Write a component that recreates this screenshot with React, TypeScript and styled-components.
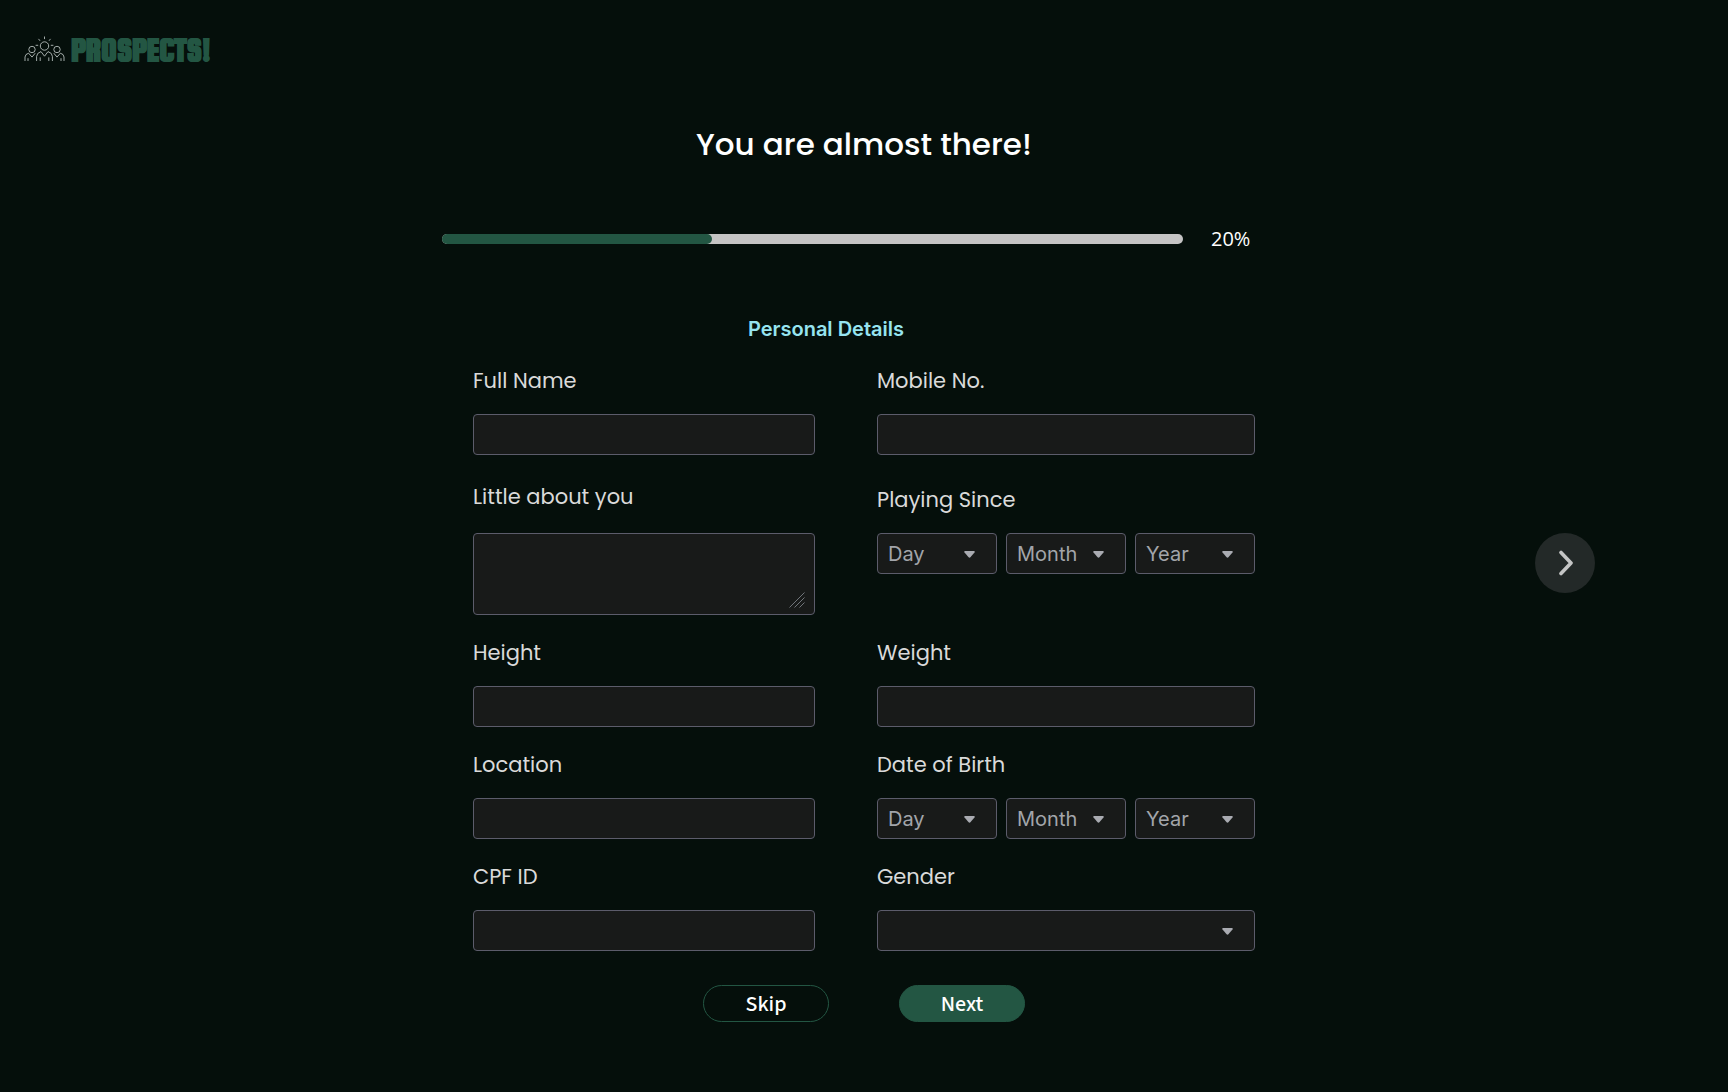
import React from "react";
import styled, { createGlobalStyle } from "styled-components";

const color = {
  page: "#050f0b",
  field: "#181a19",
  border: "#5c5c6b",
  green: "#235643",
  track: "#c5c4c4",
  label: "#dadada",
  hint: "#a2a5aa",
  heading: "#96e4f0",
};

const display = 'Poppins, Inter, "Open Sans", sans-serif';
const body = 'Inter, Roboto, sans-serif';
const humanist = '"Source Sans 3", "Noto Sans", sans-serif';

const GlobalStyle = createGlobalStyle`
  *, *::before, *::after { box-sizing: border-box; }
  body {
    margin: 0;
    background: ${color.page};
    color: #fff;
    font-family: ${body};
  }
`;

const Page = styled.div`
  min-height: 100vh;
`;

const Header = styled.header`
  padding: 32px 24px 0;
`;

const Brand = styled.a`
  display: inline-flex;
  align-items: center;
  gap: 6px;
  height: 36px;
  color: ${color.green};
  font-family: "Squada One", "Roboto Condensed", "Liberation Sans Narrow", sans-serif;
  font-size: 33px;
  font-weight: 700;
  line-height: 36px;
  text-decoration: none;
  -webkit-text-stroke: 1px ${color.green};
`;

const Title = styled.h1`
  margin: 54px 0 0;
  font-family: ${display};
  font-size: 31px;
  font-weight: 500;
  line-height: 44px;
  text-align: center;
`;

const ProgressRow = styled.div`
  display: flex;
  align-items: center;
  gap: 28px;
  width: 100%;
  max-width: 844px;
  margin: 59px auto 0;
  line-height: 28px;
`;

const Track = styled.div`
  flex: 1;
  max-width: 741px;
  height: 10px;
  border-radius: 5px;
  background: ${color.track};
`;

const Fill = styled.div`
  height: 100%;
  border-radius: 5px;
  background: ${color.green};
`;

const Percent = styled.span`
  font-family: "Open Sans", sans-serif;
  font-size: 20px;
`;

const Main = styled.main`
  display: grid;
  grid-template-columns: 1fr minmax(0, 782px) 1fr;
  margin-top: 62px;
  padding-bottom: 70px;
`;

const Form = styled.form`
  grid-column: 2;
`;

const SectionTitle = styled.h2`
  margin: 0 0 21px;
  padding-right: 76px;
  color: ${color.heading};
  font-size: 20px;
  font-weight: 600;
  line-height: 28px;
  text-align: center;
`;

const Row = styled.div<{ $top?: number }>`
  display: grid;
  grid-template-columns: 342fr 378fr;
  column-gap: 62px;
  margin-top: ${(p) => p.$top ?? 21}px;
`;

const Field = styled.div<{ $gap?: number; $top?: number }>`
  display: flex;
  flex-direction: column;
  gap: ${(p) => p.$gap ?? 16}px;
  min-width: 0;
  padding-top: ${(p) => p.$top ?? 0}px;
`;

const Label = styled.label`
  color: ${color.label};
  font-family: ${display};
  font-size: 21px;
  line-height: 34px;
`;

const Input = styled.input`
  width: 100%;
  height: 41px;
  padding: 0 12px;
  border: 1px solid ${color.border};
  border-radius: 4px;
  background: ${color.field};
  color: ${color.label};
  font: 20px ${body};
`;

const Control = styled.div`
  position: relative;
  display: flex;
  flex: 1;
`;

const TextArea = styled.textarea`
  width: 100%;
  height: 82px;
  padding: 8px 12px;
  border: 1px solid ${color.border};
  border-radius: 4px;
  background: ${color.field};
  color: ${color.label};
  font: 20px ${body};
  resize: none;
`;

const Grip = styled.svg`
  position: absolute;
  right: 10px;
  bottom: 7px;
  pointer-events: none;
`;

const SelectBox = styled.select`
  appearance: none;
  width: 100%;
  height: 41px;
  padding: 0 36px 0 10px;
  border: 1px solid ${color.border};
  border-radius: 4px;
  background: ${color.field};
  color: ${color.hint};
  font: 20px ${body};
`;

const Caret = styled.svg`
  position: absolute;
  top: 18px;
  right: 22px;
  pointer-events: none;
`;

const Dates = styled.div`
  display: flex;
  gap: 9px;
`;

const Actions = styled.div`
  display: flex;
  justify-content: center;
  gap: 70px;
  margin-top: 34px;
`;

const Action = styled.button<{ $primary?: boolean }>`
  width: 126px;
  height: 37px;
  padding: 2px 0 0;
  border: 1px solid ${color.green};
  border-radius: 19px;
  background: ${(p) => (p.$primary ? color.green : "transparent")};
  color: #fff;
  font: 500 22px/33px ${humanist};
  cursor: pointer;
`;

const Forward = styled.button`
  display: flex;
  align-items: center;
  justify-content: center;
  justify-self: end;
  width: 60px;
  height: 60px;
  margin: 218px 133px 0 0;
  padding: 0 0 0 2px;
  border: 0;
  border-radius: 50%;
  background: #232928;
  cursor: pointer;
`;

function Select({ id, label, options }: { id: string; label: string; options: (string | number)[] }) {
  return (
    <Control>
      <SelectBox id={id} aria-label={label} defaultValue="">
        <option value="">{label === "Gender" ? "" : label}</option>
        {options.map((o) => (
          <option key={o}>{o}</option>
        ))}
      </SelectBox>
      <Caret width="11" height="7" viewBox="0 0 11 7" aria-hidden="true">
        <path d="M1 0h9q1.200 .3.500 1.400L6.600 6.100q-1.100 1.100-2.200 0L.500 1.400Q-.200.300 1 0Z" fill="#a9abb1" />
      </Caret>
    </Control>
  );
}

const range = (from: number, count: number) => Array.from({ length: count }, (_, i) => from + i);
const months = ["Jan", "Feb", "Mar", "Apr", "May", "Jun", "Jul", "Aug", "Sep", "Oct", "Nov", "Dec"];

function DateField({ id, label, top }: { id: string; label: string; top?: number }) {
  return (
    <Field $top={top}>
      <Label htmlFor={`${id}-day`}>{label}</Label>
      <Dates>
        <Select id={`${id}-day`} label="Day" options={range(1, 31)} />
        <Select id={`${id}-month`} label="Month" options={months} />
        <Select id={`${id}-year`} label="Year" options={range(1960, 60)} />
      </Dates>
    </Field>
  );
}

function TextField({ id, label, type = "text" }: { id: string; label: string; type?: string }) {
  return (
    <Field>
      <Label htmlFor={id}>{label}</Label>
      <Input id={id} type={type} />
    </Field>
  );
}

function Crowd() {
  return (
    <svg width="41" height="28" viewBox="0 0 41 28" fill="none" stroke="#b4bcba" strokeWidth="0.9" aria-hidden="true">
      <circle cx="20.500" cy="10" r="4.200" />
      <circle cx="8" cy="13.500" r="3.200" />
      <circle cx="33" cy="13.500" r="3.200" />
      <path d="M20.500 .5v2.600M14.500 2.900l1.500 1.900M26.500 2.900L25 4.800M11.600 9.300h2.600M26.800 9.300h2.600" />
      <path d="M12.600 25v-4.600q.2-3.600 4.400-4.800l3.500 4.600 3.500-4.600q4.200 1.200 4.400 4.800v4.600" />
      <path d="M16.200 25v-3.600M24.800 25v-3.600" />
      <path d="M1 25v-4q.2-3 3.600-3.800L8 21.100l3.200-3.900M4 25v-2.800" />
      <path d="M40 25v-4q-.2-3-3.600-3.800L33 21.100l-3.200-3.900M37 25v-2.800" />
    </svg>
  );
}

export default function App() {
  const filled = 270 / 741;
  return (
    <Page>
      <GlobalStyle />
      <Header>
        <Brand href="#">
          <Crowd />
          PROSPECTS!
        </Brand>
      </Header>
      <Title>You are almost there!</Title>
      <ProgressRow>
        <Track>
          <Fill style={{ width: `${filled * 100}%` }} />
        </Track>
        <Percent>20%</Percent>
      </ProgressRow>
      <Main>
        <Form onSubmit={(e) => e.preventDefault()}>
          <SectionTitle>Personal Details</SectionTitle>
          <Row>
            <TextField id="name" label="Full Name" />
            <TextField id="mobile" label="Mobile No." type="tel" />
          </Row>
          <Row $top={25}>
            <Field $gap={19}>
              <Label htmlFor="about">Little about you</Label>
              <Control>
                <TextArea id="about" />
                <Grip width="16" height="16" viewBox="0 0 16 16" stroke="#70757a" aria-hidden="true">
                  <path d="M0.5 15.5l15-15M5.500 15.500l10-10M10.500 15.500l5-5" />
                </Grip>
              </Control>
            </Field>
            <DateField id="since" label="Playing Since" top={3} />
          </Row>
          <Row>
            <TextField id="height" label="Height" />
            <TextField id="weight" label="Weight" />
          </Row>
          <Row>
            <TextField id="location" label="Location" />
            <DateField id="birth" label="Date of Birth" />
          </Row>
          <Row>
            <TextField id="cpf" label="CPF ID" />
            <Field>
              <Label htmlFor="gender">Gender</Label>
              <Select id="gender" label="Gender" options={["Female", "Male", "Other"]} />
            </Field>
          </Row>
          <Actions>
            <Action type="button">Skip</Action>
            <Action type="submit" $primary>
              Next
            </Action>
          </Actions>
        </Form>
        <Forward type="button" aria-label="Next step">
          <svg width="16" height="26" viewBox="0 0 16 26" fill="none" stroke="#c4c5c5" strokeWidth="3.600" strokeLinecap="round" strokeLinejoin="round" aria-hidden="true">
            <path d="M3 2.500L13 13 3 23.500" />
          </svg>
        </Forward>
      </Main>
    </Page>
  );
}
